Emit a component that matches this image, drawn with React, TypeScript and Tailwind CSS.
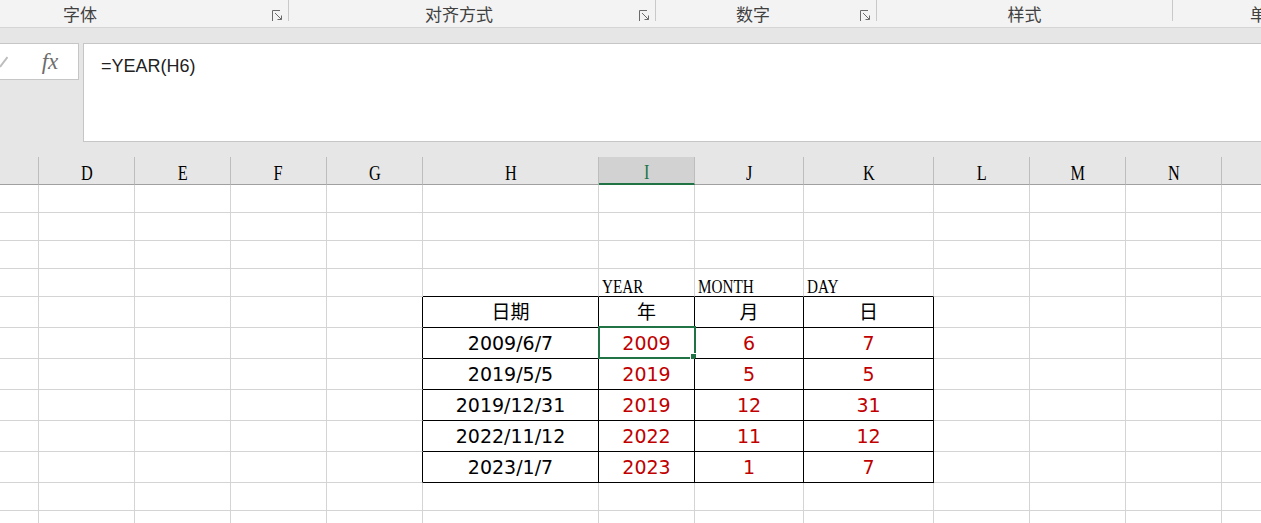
import React from "react";

type Col = { key: string; w: string };
const COLS: Col[] = [
  { key: "C", w: "w-[96px]" },
  { key: "D", w: "w-[96px]" },
  { key: "E", w: "w-[96px]" },
  { key: "F", w: "w-[96px]" },
  { key: "G", w: "w-[96px]" },
  { key: "H", w: "w-[176px]" },
  { key: "I", w: "w-[96px]" },
  { key: "J", w: "w-[109px]" },
  { key: "K", w: "w-[130px]" },
  { key: "L", w: "w-[96px]" },
  { key: "M", w: "w-[96px]" },
  { key: "N", w: "w-[96px]" },
  { key: "O", w: "w-[96px]" },
];

const TABLE_COLS = ["H", "I", "J", "K"];

type CellData = { text: string; kind: "label" | "black" | "red" };

const DATA: { date: string; y: string; m: string; d: string }[] = [
  { date: "2009/6/7", y: "2009", m: "6", d: "7" },
  { date: "2019/5/5", y: "2019", m: "5", d: "5" },
  { date: "2019/12/31", y: "2019", m: "12", d: "31" },
  { date: "2022/11/12", y: "2022", m: "11", d: "12" },
  { date: "2023/1/7", y: "2023", m: "1", d: "7" },
];

function rowContent(row: number): Record<string, CellData> {
  if (row === 4)
    return {
      I: { text: "YEAR", kind: "label" },
      J: { text: "MONTH", kind: "label" },
      K: { text: "DAY", kind: "label" },
    };
  if (row === 5)
    return {
      H: { text: "日期", kind: "black" },
      I: { text: "年", kind: "black" },
      J: { text: "月", kind: "black" },
      K: { text: "日", kind: "black" },
    };
  if (row >= 6 && row <= 10) {
    const r = DATA[row - 6];
    return {
      H: { text: r.date, kind: "black" },
      I: { text: r.y, kind: "red" },
      J: { text: r.m, kind: "red" },
      K: { text: r.d, kind: "red" },
    };
  }
  return {};
}

const ROWS: { n: number; h: string }[] = [
  { n: 1, h: "h-[28px]" },
  { n: 2, h: "h-[28px]" },
  { n: 3, h: "h-[28px]" },
  { n: 4, h: "h-[28px]" },
  { n: 5, h: "h-[31px]" },
  { n: 6, h: "h-[31px]" },
  { n: 7, h: "h-[31px]" },
  { n: 8, h: "h-[31px]" },
  { n: 9, h: "h-[31px]" },
  { n: 10, h: "h-[31px]" },
  { n: 11, h: "h-[28px]" },
  { n: 12, h: "h-[28px]" },
];

function Launcher() {
  return (
    <svg width="11" height="11" viewBox="0 0 11 11" fill="none" stroke="#6a6a6a" strokeWidth="1" className="shrink-0 self-start mt-[10px] mr-[5px]">
      <path d="M0.5 11V0.5H8" />
      <path d="M3 3L9.5 9.5" />
      <path d="M5.5 9.5H9.5V5.5" />
    </svg>
  );
}

function Group({ label, w, launcher, extra }: { label: string; w: string; launcher?: boolean; extra?: string }) {
  return (
    <div className={`flex shrink-0 h-[27px] ${extra ?? ""}`}>
      <div className={`flex ${w} shrink-0`}>
        <div className={`flex-1 flex items-center justify-center ${launcher ? "pr-[10px]" : ""}`}>
          <span className="text-[17px] text-[#404040] font-['Noto_Sans_CJK_SC',sans-serif] leading-none whitespace-nowrap">{label}</span>
        </div>
        {launcher ? <Launcher /> : null}
      </div>
      <div className="w-px h-[21px] bg-[#c9c9c9] shrink-0" />
    </div>
  );
}

function Ribbon() {
  return (
    <div className="flex h-[28px] bg-[#f3f3f3] border-b border-[#d5d5d5] box-border overflow-hidden">
      <Group label="字体" w="w-[390px]" launcher extra="-ml-[102px]" />
      <Group label="对齐方式" w="w-[366px]" launcher />
      <Group label="数字" w="w-[220px]" launcher />
      <Group label="样式" w="w-[295px]" />
      <Group label="单元格" w="w-[205px]" />
    </div>
  );
}

function FormulaBand() {
  return (
    <div className="h-[129px] bg-[#e6e6e6] pt-[15px] flex items-start gap-[4px]">
      <div className="w-[79px] h-[37px] bg-white border-t border-b border-r border-[#c6c6c6] box-border flex items-center shrink-0">
        <svg width="8" height="12" viewBox="0 0 8 12" className="shrink-0">
          <path d="M0 11L7.5 1" stroke="#bdbdbd" strokeWidth="2" fill="none" />
        </svg>
        <div className="flex-1 flex justify-center pl-[14px]">
          <span className="font-['Liberation_Serif',serif] italic text-[23px] leading-none text-[#6d6d6d]">fx</span>
        </div>
      </div>
      <div className="flex-1 h-[99px] bg-white border-t border-b border-l border-[#c6c6c6] box-border pl-[17px] pt-[10px]">
        <span className="font-['Liberation_Sans',sans-serif] text-[18px] leading-none text-[#222222]">=YEAR(H6)</span>
      </div>
    </div>
  );
}

function HeaderRow() {
  return (
    <div className="flex -ml-[57px] h-[28px]">
      {COLS.map((c) => {
        const sel = c.key === "I";
        const hidden = c.key === "C" || c.key === "O";
        return (
          <div
            key={c.key}
            className={`${c.w} shrink-0 box-border border-r border-r-[#bdbdbd] flex items-center justify-center pt-[4px] ${
              sel ? "bg-[#d2d2d2] border-b-2 border-b-[#217346]" : "bg-[#e6e6e6] border-b border-b-[#a0a0a0]"
            }`}
          >
            <span
              className={`inline-block scale-x-[0.74] font-['Liberation_Serif',serif] text-[22px] leading-none ${
                sel ? "text-[#217346]" : "text-black"
              }`}
            >
              {hidden ? "" : c.key}
            </span>
          </div>
        );
      })}
    </div>
  );
}

function GridRow({ n, h }: { n: number; h: string }) {
  const content = rowContent(n);
  const inTable = n >= 5 && n <= 10;
  return (
    <div className={`flex -ml-[57px] ${h}`}>
      {COLS.map((c) => {
        const rightBlack = inTable && (c.key === "G" || TABLE_COLS.includes(c.key));
        const bottomBlack = n >= 4 && n <= 10 && TABLE_COLS.includes(c.key);
        const cell = content[c.key];
        const selected = n === 6 && c.key === "I";
        const base = `${c.w} shrink-0 box-border border-r border-b relative flex ${
          rightBlack ? "border-r-black" : "border-r-[#d4d4d4]"
        } ${bottomBlack ? "border-b-black" : "border-b-[#d4d4d4]"}`;
        let inner: React.ReactNode = null;
        let align = "";
        if (cell) {
          if (cell.kind === "label") {
            align = "items-end pl-[3px]";
            inner = (
              <span className="inline-block origin-left scale-x-[0.8] font-['Liberation_Serif',serif] text-[19px] leading-none text-black whitespace-nowrap">
                {cell.text}
              </span>
            );
          } else {
            align = "items-center justify-center";
            inner = (
              <span
                className={`font-['DejaVu_Sans','Noto_Sans_CJK_SC',sans-serif] text-[19px] leading-none whitespace-nowrap ${
                  cell.kind === "red" ? "text-[#c00000]" : "text-black"
                }`}
              >
                {cell.text}
              </span>
            );
          }
        }
        return (
          <div key={c.key} className={`${base} ${align}`}>
            {inner}
            {selected ? (
              <div className="absolute -left-[1px] -right-[2px] -top-[2px] -bottom-[1px] border-2 border-[#217346]">
                <div className="absolute -right-[3px] -bottom-[3px] w-[7px] h-[7px] bg-[#217346] border border-white" />
              </div>
            ) : null}
          </div>
        );
      })}
    </div>
  );
}

export default function App() {
  return (
    <div className="w-[1261px] h-[523px] overflow-hidden bg-white">
      <Ribbon />
      <FormulaBand />
      <HeaderRow />
      {ROWS.map((r) => (
        <GridRow key={r.n} n={r.n} h={r.h} />
      ))}
    </div>
  );
}
